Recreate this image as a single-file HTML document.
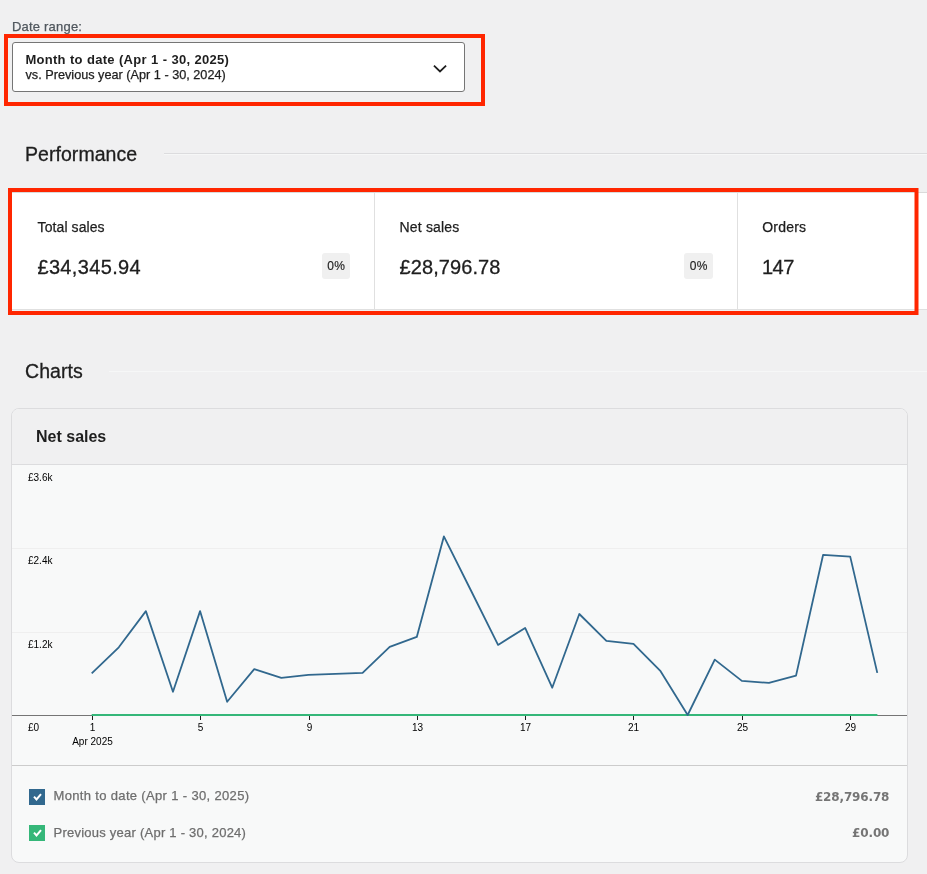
<!DOCTYPE html>
<html lang="en">
<head>
<meta charset="utf-8">
<title>Analytics Overview</title>
<style>
*{box-sizing:border-box;margin:0;padding:0}
html,body{width:927px;height:874px;overflow:hidden;background:#f0f0f1}
body{position:relative;font-family:"Liberation Sans",sans-serif;color:#1e1e1e;-webkit-font-smoothing:antialiased;will-change:transform}
.abs{position:absolute;white-space:nowrap;line-height:1}
.redbox{position:absolute;border:4px solid #ff2600;pointer-events:none}
.lbl{left:12px;top:20px;font-size:13px;letter-spacing:.2px;color:#50575e}
.dd{position:absolute;left:12px;top:42px;width:453px;height:50px;background:#fff;border:1px solid #757575;border-radius:3px}
.dd .l1{left:12.5px;top:9.7px;font-size:13px;letter-spacing:.26px;word-spacing:.35px;font-weight:bold;color:#1e1e1e}
.dd .l2{left:12.5px;top:26.3px;font-size:12.7px;letter-spacing:0;color:#1e1e1e}
.dd svg{position:absolute}
h2.sec{position:absolute;left:25px;font-size:19.5px;letter-spacing:.05px;font-weight:normal;line-height:1;color:#1e1e1e;white-space:nowrap}
.hr{position:absolute;height:2px;right:0}
.hr1{left:164px;top:153px;border-top:1px solid #dcdcde;border-bottom:1px solid #f6f7f7}
.hr2{left:109px;top:371px;height:1px;background:#f6f7f7}
.perf{position:absolute;left:12px;top:192px;width:915px;overflow:hidden;height:118px;background:#fff;border-top:1px solid #dadada;border-bottom:1px solid #e0e0e0}
.perf .div{position:absolute;top:0;bottom:0;width:1px;background:#e0e0e0}
.perf .t{font-size:14px;letter-spacing:.08px;color:#1e1e1e;margin-top:-1px;margin-left:-.4px}
.perf .v{font-size:20px;letter-spacing:.35px;color:#1e1e1e;margin-top:-1.4px;margin-left:-.6px}
.badge{position:absolute;width:28.4px;height:26px;top:60px;background:#f0f0f0;border-radius:3px;font-size:12px;letter-spacing:.3px;text-indent:.3px;line-height:26px;text-align:center;color:#1e1e1e}
.card{position:absolute;left:11px;top:408px;width:897px;height:455px;border:1px solid #dcdcde;border-radius:8px;background:#f8f9f9;overflow:hidden}
.card .hd{position:absolute;left:0;top:0;right:0;height:56px;background:#f0f0f1;border-bottom:1px solid #dcdcde}
.card .hd .ttl{left:24px;top:20px;font-size:16px;font-weight:bold;color:#1e1e1e}
.card svg.chart{position:absolute;left:0;top:56px}
.card .lg{position:absolute;left:0;right:0;top:356px;bottom:0;border-top:1px solid #ccc}
.cb{position:absolute;left:17px;width:16px;height:16px}
.lt{left:41.5px;font-size:13px;letter-spacing:.34px;color:#6e6e6e}
.lv{right:17.7px;font-family:"DejaVu Sans","Liberation Sans",sans-serif;font-size:12px;letter-spacing:-.15px;font-weight:bold;color:#757575;margin-top:1.3px}
.lbl,.dd .l2,.perf .t,.lt{-webkit-text-stroke:.25px currentColor}
h2.sec,.perf .v{-webkit-text-stroke:.3px currentColor}
.badge{-webkit-text-stroke:.15px currentColor}
</style>
</head>
<body>
<div class="abs lbl">Date range:</div>
<div class="dd">
  <div class="abs l1">Month to date (Apr 1 - 30, 2025)</div>
  <div class="abs l2">vs. Previous year (Apr 1 - 30, 2024)</div>
  <svg width="20" height="16" viewBox="0 0 20 16" style="left:417px;top:17px"><path d="M3.95 5.6 L10 11.4 L16.1 5.6" fill="none" stroke="#1e1e1e" stroke-width="1.8"/></svg>
</div>
<div class="redbox" style="left:4px;top:34px;width:481px;height:72px"></div>

<h2 class="sec" style="top:145.3px">Performance</h2>
<div class="hr hr1"></div>

<div class="perf">
  <div class="abs t" style="left:26px;top:28px">Total sales</div>
  <div class="abs v" style="left:26px;top:65px">£34,345.94</div>
  <div class="badge" style="left:309.8px">0%</div>
  <div class="div" style="left:362px"></div>
  <div class="abs t" style="left:388px;top:28px;letter-spacing:.15px">Net sales</div>
  <div class="abs v" style="left:388.2px;top:65px;letter-spacing:.08px">£28,796.78</div>
  <div class="badge" style="left:672.3px">0%</div>
  <div class="div" style="left:725px"></div>
  <div class="abs t" style="left:750.6px;top:28px;letter-spacing:.2px">Orders</div>
  <div class="abs v" style="left:750.6px;top:65px;letter-spacing:-.5px">147</div>
</div>
<svg class="rb" width="927" height="140" viewBox="0 0 927 140" style="position:absolute;left:0;top:184px"><rect x="10" y="6" width="906.5" height="123" fill="none" stroke="#ff2600" stroke-width="4"/></svg>

<h2 class="sec" style="top:362.3px">Charts</h2>
<div class="hr hr2"></div>

<div class="card">
  <div class="hd"><div class="abs ttl">Net sales</div></div>
  <svg class="chart" width="895" height="300" viewBox="0 0 895 300" font-family="Liberation Sans, sans-serif" font-size="10" fill="#000">
    <line x1="0" x2="895" y1="83.5" y2="83.5" stroke="#efefef" stroke-width="1"/>
    <line x1="0" x2="895" y1="167.5" y2="167.5" stroke="#efefef" stroke-width="1"/>
    <line x1="0" x2="895" y1="250.5" y2="250.5" stroke="#757575" stroke-width="1"/>
    <text x="16" y="15.9">£3.6k</text>
    <text x="16" y="98.9">£2.4k</text>
    <text x="16" y="182.9">£1.2k</text>
    <text x="16" y="265.9">£0</text>
    <g stroke="#1e1e1e" stroke-width="1">
      <line x1="80.5" x2="80.5" y1="251" y2="255"/>
      <line x1="188.5" x2="188.5" y1="251" y2="255"/>
      <line x1="297.5" x2="297.5" y1="251" y2="255"/>
      <line x1="405.5" x2="405.5" y1="251" y2="255"/>
      <line x1="513.5" x2="513.5" y1="251" y2="255"/>
      <line x1="621.5" x2="621.5" y1="251" y2="255"/>
      <line x1="730.5" x2="730.5" y1="251" y2="255"/>
      <line x1="838.5" x2="838.5" y1="251" y2="255"/>
    </g>
    <g text-anchor="middle">
      <text x="80.5" y="265.9">1</text>
      <text x="188.5" y="265.9">5</text>
      <text x="297.5" y="265.9">9</text>
      <text x="405.5" y="265.9">13</text>
      <text x="513.5" y="265.9">17</text>
      <text x="621.5" y="265.9">21</text>
      <text x="730.5" y="265.9">25</text>
      <text x="838.5" y="265.9">29</text>
      <text x="80.5" y="279.9">Apr 2025</text>
    </g>
    <line x1="79.7" x2="865.4" y1="250" y2="250" stroke="#35b779" stroke-width="2.2"/>
    <polyline fill="none" stroke="#31688e" stroke-width="1.8" stroke-linejoin="round" points="79.70,208.40 106.79,182.30 133.88,146.10 160.97,226.80 188.06,146.10 215.15,236.80 242.24,204.10 269.33,212.90 296.42,209.90 323.51,208.80 350.60,207.95 377.69,181.95 404.78,171.90 431.87,71.40 458.96,125.50 486.04,179.90 513.13,162.95 540.22,222.70 567.31,149.00 594.40,175.80 621.49,178.80 648.58,206.20 675.67,250.00 702.76,194.60 729.85,215.90 756.94,217.90 784.03,210.60 811.12,89.80 838.21,91.60 865.30,207.90"/>
  </svg>
  <div class="lg">
    <svg class="cb" style="top:23px" viewBox="0 0 16 16"><rect width="16" height="16" fill="#31688e"/><path d="M5 7.7 L7.5 10.5 L12 5.2" fill="none" stroke="#fff" stroke-width="2"/></svg>
    <div class="abs lt" style="top:23.4px">Month to date (Apr 1 - 30, 2025)</div>
    <div class="abs lv" style="top:24px">£28,796.78</div>
    <svg class="cb" style="top:59px" viewBox="0 0 16 16"><rect width="16" height="16" fill="#35b779"/><path d="M5 7.7 L7.5 10.5 L12 5.2" fill="none" stroke="#fff" stroke-width="2"/></svg>
    <div class="abs lt" style="top:59.6px;letter-spacing:.24px">Previous year (Apr 1 - 30, 2024)</div>
    <div class="abs lv" style="top:60px">£0.00</div>
  </div>
</div>
</body>
</html>
